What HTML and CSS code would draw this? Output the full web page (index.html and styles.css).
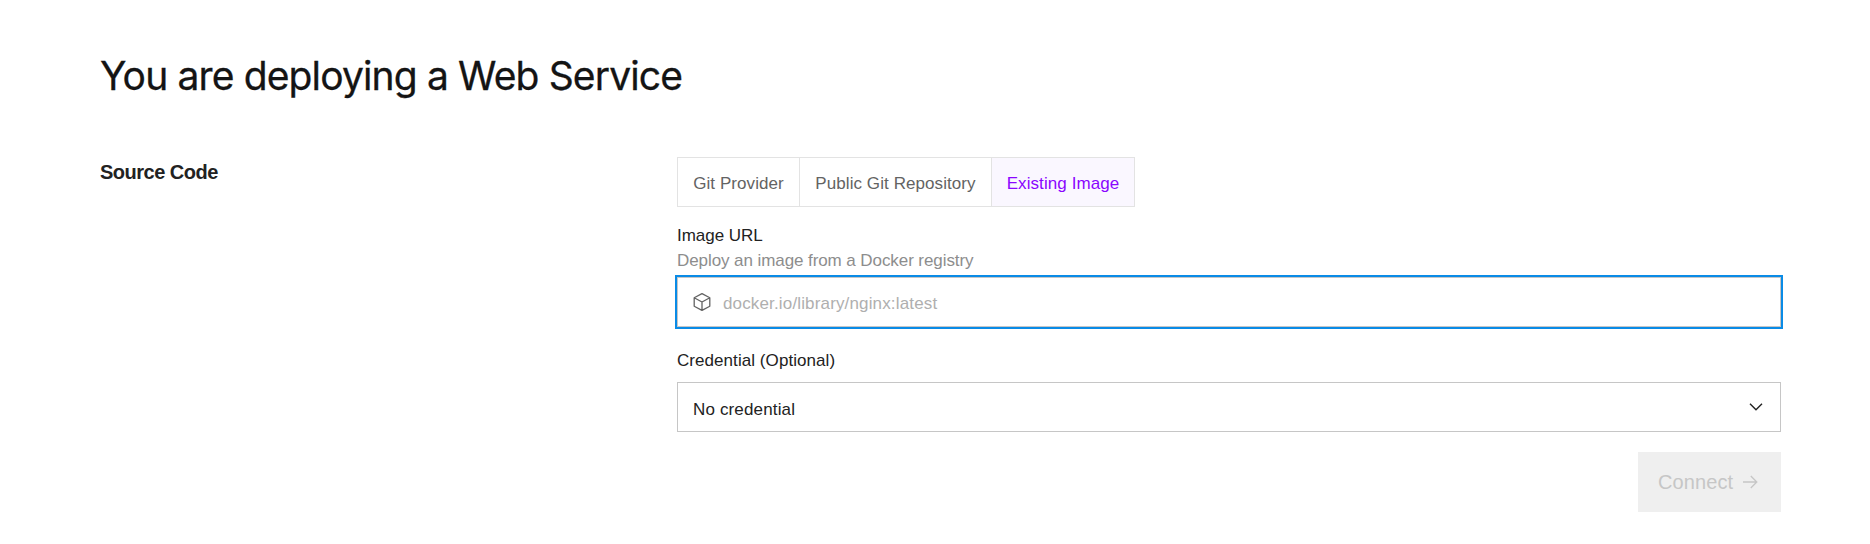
FILE: index.html
```html
<!DOCTYPE html>
<html lang="en">
<head>
<meta charset="utf-8">
<title>Deploy a Web Service</title>
<link rel="stylesheet" href="styles.css">
</head>
<body>
<main class="page">
  <h1 class="title">You are deploying a Web Service</h1>
  <section class="section">
    <h2 class="section-title">Source Code</h2>
    <form class="form">
      <div class="tabs">
        <button type="button" class="tab tab-git">Git Provider</button>
        <button type="button" class="tab tab-public">Public Git Repository</button>
        <button type="button" class="tab tab-image active">Existing Image</button>
      </div>
      <label class="label" for="image-url">Image URL</label>
      <p class="hint">Deploy an image from a Docker registry</p>
      <div class="field field-focus">
        <svg class="cube" width="18" height="20" viewBox="0 0 18 20" fill="none" stroke="#636363" stroke-width="1.3" stroke-linejoin="round"><path d="M9 1.6 1.2 5.8v8.4L9 18.4l7.8-4.2V5.8zM1.2 5.8 9 10l7.8-4.2M9 10v8.4"/></svg>
        <input class="input" id="image-url" type="text" placeholder="docker.io/library/nginx:latest">
      </div>
      <div class="label label-credential">Credential (Optional)</div>
      <div class="field field-select">
        <span class="value">No credential</span>
        <svg width="14" height="10" viewBox="0 0 14 10" fill="none" stroke="#222" stroke-width="1.4"><path d="M1 1.7 7 7.8l6-6.1"/></svg>
      </div>
      <button type="button" class="connect" disabled>
        <span>Connect</span>
        <svg width="16" height="14" viewBox="0 0 16 14" fill="none" stroke="#c6c6c6" stroke-width="1.3"><path d="M1 7h13.5M8.8 1l6 6-6 6"/></svg>
      </button>
    </form>
  </section>
</main>
</body>
</html>
```
FILE: styles.css
```css
* { box-sizing: border-box; }
body {
  margin: 0;
  background: #fff;
  color: #222;
  font: 17px/24px "Liberation Sans", Arial, sans-serif;
}
.page { padding: 52px 89px 0 100px; }
.title {
  margin: 0;
  color: #141414;
  font: 400 39px/48px Inter, sans-serif;
  letter-spacing: -0.86px;
  -webkit-text-stroke: 0.3px #141414;
}
.section {
  display: grid;
  grid-template-columns: 577px 1fr;
  padding-top: 57px;
}
.section-title {
  margin: 3px 0 0;
  font-size: 20px;
  line-height: 24px;
  letter-spacing: -0.5px;
}
.form { display: flex; flex-direction: column; }
.tabs { display: flex; height: 50px; }
.tab {
  height: 50px;
  margin: 0;
  padding: 3px 0 0;
  border: 1px solid #e3e3e3;
  background: #fff;
  color: #636363;
  font: inherit;
  letter-spacing: 0.08px;
}
.tab + .tab { border-left: 0; }
.tab-git { width: 123px; }
.tab-public { width: 192px; }
.tab-image { width: 143px; }
.tab.active { background: #faf7ff; color: #8a05ff; }
.label { margin-top: 17px; letter-spacing: -0.02px; }
.hint { margin: 1px 0 0; color: #8d8d8d; letter-spacing: -0.08px; }
.field {
  display: flex;
  align-items: center;
  height: 50px;
  border: 1px solid #c6c6c6;
  padding: 0 15px;
}
.field-focus { margin-top: 4px; outline: 2px solid #0a8be6; }
.cube { margin-bottom: 1px; }
.input {
  flex: 1;
  padding: 4px 0 0;
  margin-left: 12px;
  border: 0;
  outline: 0;
  background: none;
  color: #222;
  font: inherit;
  letter-spacing: 0.15px;
}
.input::placeholder { color: #afafaf; }
.label-credential { margin-top: 22px; letter-spacing: 0.06px; }
.field-select { justify-content: space-between; margin-top: 9px; padding-right: 17px; }
.value { padding-top: 5px; letter-spacing: 0.15px; }
.connect {
  display: flex;
  align-self: flex-end;
  align-items: center;
  gap: 9px;
  width: 143px;
  height: 60px;
  margin-top: 20px;
  padding: 0 0 0 20px;
  border: 0;
  background: #efefef;
  color: #c6c6c6;
  font: inherit;
  font-size: 20px;
  letter-spacing: 0.1px;
}
```
